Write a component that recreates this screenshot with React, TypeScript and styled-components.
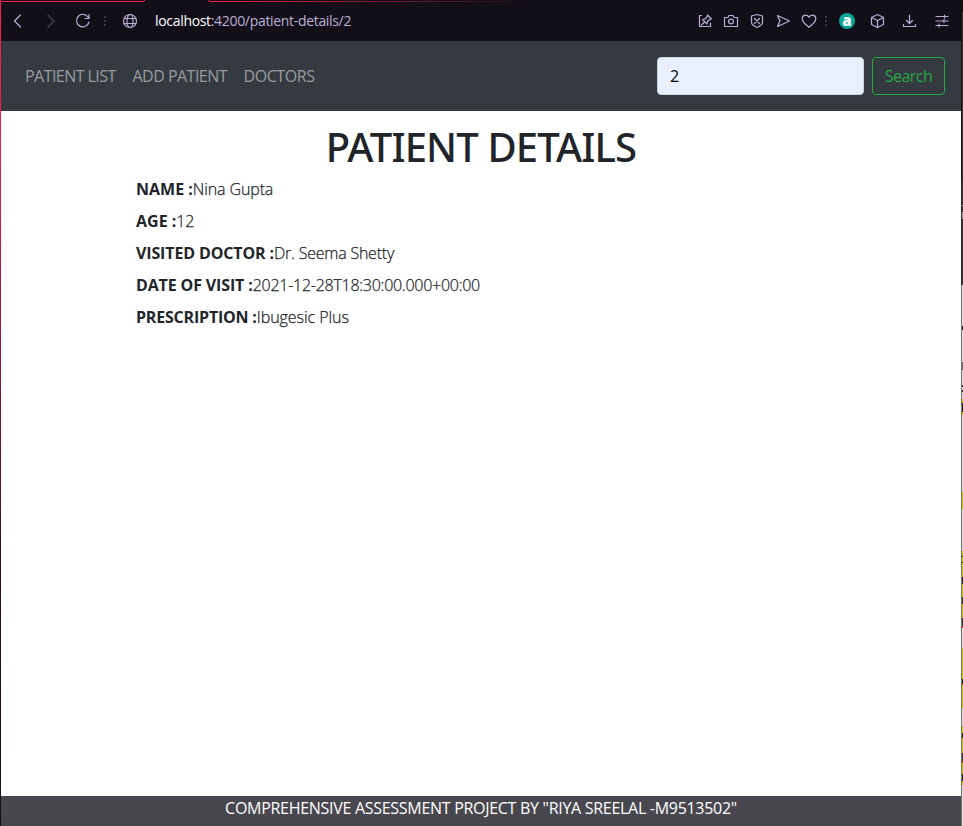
import React from "react";
import styled, { createGlobalStyle } from "styled-components";

const Global = createGlobalStyle`
  *, *::before, *::after { box-sizing: border-box; }
  html, body { margin: 0; padding: 0; overflow: hidden; }
  body { font: 400 16px/24px "Open Sans", "Noto Sans", sans-serif; color: #212529; background: #fff; }
  h1, p { margin: 0; }
`;

const Window = styled.div`
  width: 963px;
  height: 826px;
  display: grid;
  grid-template-columns: 1px 960px 2px;
  overflow: hidden;
`;

const LeftEdge = styled.div`
  background: linear-gradient(#fa1e4e 0, #e61c49 180px, #2a0b1b 620px, #120f19 826px);
`;

const Page = styled.div`
  display: flex;
  flex-direction: column;
  height: 826px;
  background: #fff;
`;

const TabStrip = styled.div`
  display: grid;
  grid-template-columns: 143px 65px 1fr;
  height: 2px;
  background: #120f19;
`;

const TabLine = styled.div<{ $fade?: boolean }>`
  height: 1px;
  margin-top: 1px;
  background: ${(p) => (p.$fade ? "linear-gradient(90deg, #fa1e4e 0, #120f19 330px)" : "#fa1e4e")};
`;

const ActiveTab = styled.div`
  border-left: 1px solid #fa1e4e;
  border-right: 1px solid #fa1e4e;
  height: 1px;
`;

const Toolbar = styled.div`
  display: flex;
  align-items: center;
  height: 39px;
  padding: 0 11px 1px 9px;
  background: #120f19;
  color: #b9afd2;
`;

const Glyph = styled.svg<{ $gap?: number; $dim?: boolean }>`
  display: block;
  flex: none;
  width: 16px;
  height: 16px;
  margin-left: ${(p) => p.$gap ?? 0}px;
  opacity: ${(p) => (p.$dim ? 0.3 : 1)};
  fill: none;
  stroke: currentColor;
  stroke-width: 1.2;
  stroke-linecap: round;
  stroke-linejoin: round;
`;

const Dots = styled.span<{ $gap: number }>`
  flex: none;
  width: 2px;
  height: 10px;
  margin-left: ${(p) => p.$gap}px;
  background: repeating-linear-gradient(#3d3848 0 2px, transparent 2px 4px);
`;

const Address = styled.span`
  flex: 1;
  margin-left: 17px;
  font-size: 14px;
  line-height: 20px;
  white-space: nowrap;
  letter-spacing: -0.32px;
`;

const Host = styled.span`
  color: #fff;
`;

const Badge = styled.span`
  flex: none;
  display: flex;
  align-items: center;
  justify-content: center;
  width: 16px;
  height: 16px;
  margin-left: 12px;
  border-radius: 50%;
  background: #07a594;
  color: #fff;
  font: 800 15px/14px "Open Sans", sans-serif;
  padding-bottom: 3px;
`;

const Navbar = styled.nav`
  display: flex;
  align-items: center;
  flex: none;
  height: 70px;
  padding: 0 16px 0 24px;
  background: #343a40;
`;

const NavItem = styled.a<{ $track: number; $width: number }>`
  width: ${(p) => p.$width}px;
  margin-right: 16px;
  color: #999c9f;
  white-space: nowrap;
  letter-spacing: ${(p) => p.$track}px;
`;

const SearchForm = styled.form`
  display: flex;
  gap: 8px;
  margin-left: auto;
`;

const SearchInput = styled.input`
  width: 207px;
  height: 38px;
  padding: 6px 12px;
  border: 1px solid #ced4da;
  border-radius: 4px;
  background: #e8f0fe;
  color: #000;
  font: inherit;
`;

const SearchButton = styled.button`
  width: 73px;
  height: 38px;
  padding: 0;
  border: 1px solid #28a745;
  border-radius: 4px;
  background: transparent;
  color: #28a745;
  font: inherit;
  letter-spacing: -0.5px;
`;

const Content = styled.main`
  flex: 1;
  padding: 12px 135px 0;
`;

const Title = styled.h1`
  font-family: "Noto Sans", "Open Sans", sans-serif;
  font-size: 40px;
  font-weight: 500;
  line-height: 48px;
  text-align: center;
  white-space: nowrap;
  letter-spacing: -0.87px;
  margin-bottom: 6px;
`;

const Detail = styled.p<{ $track: number }>`
  height: 32px;
  line-height: 25px;
  white-space: nowrap;
  font-weight: 300;
  letter-spacing: ${(p) => p.$track}px;
  -webkit-text-stroke: 0.25px currentColor;
`;

const Label = styled.span<{ $track: number }>`
  font-weight: 700;
  letter-spacing: ${(p) => p.$track}px;
  -webkit-text-stroke: 0;
`;

const Footer = styled.footer`
  height: 30px;
  background: #49474e;
  color: #fff;
  text-align: center;
  line-height: 25px;
  white-space: nowrap;
  letter-spacing: -0.29px;
`;

const RightEdge = styled.div`
  display: grid;
  grid-template-columns: 1px 1px;
`;

const EdgeFrame = styled.div`
  background: linear-gradient(#121212 0 180px, #2b2d30 180px 285px, #777 285px);
`;

const EdgeBehind = styled.div`
  background:
    linear-gradient(transparent 205px, #aaa 205px 206px, transparent 206px 212px, #999 212px 219px, transparent 219px 326px,
      #222 326px 330px, transparent 330px 362px, #666 362px 370px, transparent 370px 385px, #222 385px 387px, transparent 387px 390px,
      #222 390px 392px, transparent 392px 403px, #222 403px 412px, transparent 412px 556px, #222 556px 557px, transparent 557px 562px,
      #222 562px 563px, transparent 563px 577px, #222 577px 584px, transparent 584px 597px, #333 597px 604px, transparent 604px 618px,
      #333 618px 625px, #c22 627px 628px, transparent 628px 679px, #222 679px 683px, #c22 684px 685px, transparent 685px 733px,
      #222 733px 738px, transparent 738px 753px, #333 753px 760px, #c22 762px 763px, transparent 763px 774px, #222 774px 781px, transparent 781px),
    linear-gradient(#151515 0 12px, #333 12px 285px, #ddd 285px 399px, #c8c800 399px 415px, #ddd 415px 492px, #c8c800 492px 509px, #ddd 509px 551px, #c8c800 551px 628px, #ddd 628px 648px, #c8c800 648px 708px, #ddd 708px 726px, #c8c800 726px 785px, #ddd 785px);
`;

const details = [
  { label: "NAME :", value: "Nina Gupta", labelTrack: 0, track: -0.12 },
  { label: "AGE :", value: "12", labelTrack: 0, track: -0.3 },
  { label: "VISITED DOCTOR :", value: "Dr. Seema Shetty", labelTrack: -0.13, track: -0.22 },
  { label: "DATE OF VISIT :", value: "2021-12-28T18:30:00.000+00:00", labelTrack: -0.14, track: -0.26 },
  { label: "PRESCRIPTION :", value: "Ibugesic Plus", labelTrack: -0.2, track: -0.05 },
];

export default function App() {
  return (
    <>
      <Global />
      <Window>
        <LeftEdge />
        <Page>
          <TabStrip><TabLine /><ActiveTab /><TabLine $fade /></TabStrip>
          <Toolbar>
            <Glyph viewBox="0 0 16 16"><path d="M10.500 2 4.500 8l6 6" /></Glyph>
            <Glyph viewBox="0 0 16 16" $gap={16} $dim><path d="m6 2 6 6-6 6" /></Glyph>
            <Glyph viewBox="0 0 16 16" $gap={17}><path d="M13.200 4.200A6.300 6.300 0 1 0 14 9M14 1.500v4h-4" /></Glyph>
            <Dots $gap={13} />
            <Glyph viewBox="0 0 16 16" $gap={16}><circle cx="8" cy="8" r="6.500" /><ellipse cx="8" cy="8" rx="3" ry="6.500" /><path d="M2.300 5.500h11.400M2.300 10.500h11.400" /></Glyph>
            <Address><Host>localhost</Host>:4200/patient-details/2</Address>
            <Glyph viewBox="0 0 16 16"><path d="M4.500 2.500h-2v11h11V10M10.500 2l4 4-2 .5-2 2-.5 2.500L5.500 6.500 8 6l2-2zM7.500 9l-3 3" /></Glyph>
            <Glyph viewBox="0 0 16 16" $gap={10}><path d="M1.500 4.500H5l1-2h4l1 2h3.500v9h-13z" /><circle cx="8" cy="8.500" r="2.400" /></Glyph>
            <Glyph viewBox="0 0 16 16" $gap={10}><path d="M8 1.500 13.500 3v6.500q0 2.500-5.500 5-5.500-2.500-5.500-5V3zM5.500 5.500l5 5m0-5-5 5" /></Glyph>
            <Glyph viewBox="0 0 16 16" $gap={10}><path d="m2.500 2.500 12 5.500-12 5.500L5 8z" /></Glyph>
            <Glyph viewBox="0 0 16 16" $gap={10}><path d="M8 14.300C5 12 1.200 9 1.200 5.500c0-4 5.300-4.700 6.800-1.200 1.500-3.500 6.800-2.800 6.800 1.200C14.800 9 11 12 8 14.300z" /></Glyph>
            <Dots $gap={8} />
            <Badge>a</Badge>
            <Glyph viewBox="0 0 16 16" $gap={14}><path d="m8.500 1.500 6 3v7l-6 3-6-3v-7zM2.500 4.500l6 3 6-3M8.500 7.500v7" /></Glyph>
            <Glyph viewBox="0 0 16 16" $gap={16}><path d="M8.500 2v8M5.500 7.500l3 3 3-3M2.500 11.500v2h12v-2" /></Glyph>
            <Glyph viewBox="0 0 16 16" $gap={17}><path d="M2 3.500h12M2 8h12M2 12.500h12M10.500 2v3M10 6.500v3M5 11v3" /></Glyph>
          </Toolbar>
          <Navbar>
            <NavItem $width={91.5} $track={-0.55}>PATIENT LIST</NavItem>
            <NavItem $width={95} $track={-0.52}>ADD PATIENT</NavItem>
            <NavItem $width={71} $track={-0.42}>DOCTORS</NavItem>
            <SearchForm onSubmit={(e) => e.preventDefault()}>
              <SearchInput defaultValue="2" aria-label="Patient id" />
              <SearchButton>Search</SearchButton>
            </SearchForm>
          </Navbar>
          <Content>
            <Title>PATIENT DETAILS</Title>
            {details.map((d) => (
              <Detail key={d.label} $track={d.track}><Label $track={d.labelTrack}>{d.label}</Label>{d.value}</Detail>
            ))}
          </Content>
          <Footer>COMPREHENSIVE ASSESSMENT PROJECT BY "RIYA SREELAL -M9513502"</Footer>
        </Page>
        <RightEdge><EdgeFrame /><EdgeBehind /></RightEdge>
      </Window>
    </>
  );
}
